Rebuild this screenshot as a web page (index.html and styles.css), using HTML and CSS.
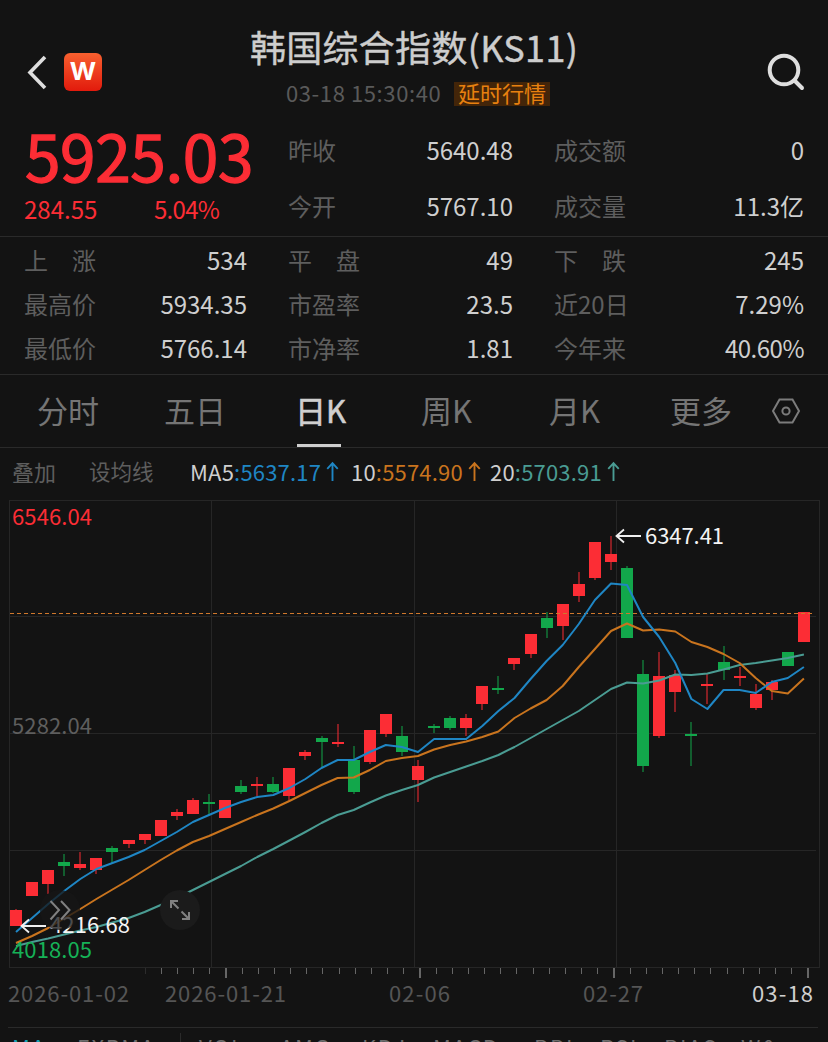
FILE: index.html
```html
<!DOCTYPE html>
<html lang="zh-CN">
<head>
<meta charset="utf-8">
<title>韩国综合指数(KS11)</title>
<link rel="stylesheet" href="styles.css">
</head>
<body>
<header class="header">
  <div class="header-left">
    <svg class="back" width="22" height="36" viewBox="0 0 22 36"><path d="M19 3 4 18.500 19 34" fill="none" stroke="#dedede" stroke-width="3.600"/></svg>
    <div class="logo"><span class="logo-mark">W</span></div>
  </div>
  <div class="heading">
    <h1 class="title">韩国综合指数(KS11)</h1>
    <div class="subtitle"><span class="time">03-18 15:30:40</span><span class="badge">延时行情</span></div>
  </div>
  <svg class="search" width="40" height="40" viewBox="0 0 40 40"><g fill="none" stroke="#dedede" stroke-width="4"><circle cx="18" cy="18" r="14.300"/><path d="m28.500 28.500 7.500 7.500" stroke-linecap="round"/></g></svg>
</header>

<section class="quote">
  <div class="price-box">
    <div class="price">5925.03</div>
    <div class="change"><span>284.55</span><span>5.04%</span></div>
  </div>
  <dl class="stat"><dt>昨收</dt><dd>5640.48</dd></dl>
  <dl class="stat"><dt>成交额</dt><dd>0</dd></dl>
  <dl class="stat"><dt>今开</dt><dd>5767.10</dd></dl>
  <dl class="stat"><dt>成交量</dt><dd>11.3亿</dd></dl>
</section>

<section class="details">
  <dl class="stat"><dt>上　涨</dt><dd>534</dd></dl>
  <dl class="stat"><dt>平　盘</dt><dd>49</dd></dl>
  <dl class="stat"><dt>下　跌</dt><dd>245</dd></dl>
  <dl class="stat"><dt>最高价</dt><dd>5934.35</dd></dl>
  <dl class="stat"><dt>市盈率</dt><dd>23.5</dd></dl>
  <dl class="stat"><dt>近20日</dt><dd>7.29%</dd></dl>
  <dl class="stat"><dt>最低价</dt><dd>5766.14</dd></dl>
  <dl class="stat"><dt>市净率</dt><dd>1.81</dd></dl>
  <dl class="stat"><dt>今年来</dt><dd class="tight">40.60%</dd></dl>
</section>

<nav class="tabs">
  <span class="tab">分时</span>
  <span class="tab">五日</span>
  <span class="tab active">日K</span>
  <span class="tab">周K</span>
  <span class="tab">月K</span>
  <span class="tab">更多</span>
  <svg class="settings" width="30" height="28" viewBox="0 0 30 28"><g fill="none" stroke="#7c7c7c" stroke-width="2"><path d="M8.500 2.500h13L28 14l-6.500 11.500h-13L2 14z"/><circle cx="15" cy="14" r="3.600"/></g></svg>
</nav>

<div class="averages">
  <span class="tool overlay">叠加</span>
  <span class="tool lines">设均线</span>
  <span class="avg first">MA5<b class="ma5">:5637.17</b><svg class="arrow ma5" viewBox="0 0 12 20"><path d="M6 19V2M1 7.500 6 2l5 5.500"/></svg></span>
  <span class="avg second">10<b class="ma10">:5574.90</b><svg class="arrow ma10" viewBox="0 0 12 20"><path d="M6 19V2M1 7.500 6 2l5 5.500"/></svg></span>
  <span class="avg">20<b class="ma20">:5703.91</b><svg class="arrow ma20" viewBox="0 0 12 20"><path d="M6 19V2M1 7.500 6 2l5 5.500"/></svg></span>
</div>

<svg class="chart" id="chart" width="828" height="527" viewBox="0 500 828 527">
  <path class="grid" d="M9 500.500H819.500M9 616.500H816M9 733.500H816M9 850.500H816M9 967.500H819.500M9.500 500V968M211.500 500V968M414.500 500V968M616.500 500V968M819.500 500V968"/>
  <text class="label faint" x="12" y="734" textLength="80">5282.04</text>
  <g id="candles"></g>
  <path class="last-price" d="M10 613.500H814"/>
  <g id="lines"></g>
  <text class="label up" x="12" y="525" textLength="80">6546.04</text>
  <text class="label down" x="12" y="958" textLength="80">4018.05</text>
  <path class="pointer" d="M641 536H617M624 529.500 616.500 536l7.500 6.500"/>
  <text class="label white" x="645" y="544" textLength="79">6347.41</text>
  <path class="pointer" d="M46 926H22M29 919.500 21.500 926l7.500 6.500"/>
  <text class="label white" x="50" y="933" textLength="80">4216.68</text>
  <circle class="control" cx="60" cy="910" r="20"/>
  <path class="control-icon" d="m50.500 901 8.500 9-8.500 9.500M61 901l8.500 9-8.500 9.500"/>
  <circle class="control solid" cx="180" cy="910" r="20"/>
  <path class="control-icon" d="M171 908v-7h7M171 901l7.500 7.500M182 919h7v-7M189 919l-7.500-7.500"/>
  <g id="ticks"></g>
  <text class="date" x="8" y="1002" textLength="121">2026-01-02</text>
  <text class="date" x="165" y="1002" textLength="121">2026-01-21</text>
  <text class="date" x="389" y="1002" textLength="61">02-06</text>
  <text class="date" x="583" y="1002" textLength="60">02-27</text>
  <text class="date current" x="752" y="1002" textLength="61">03-18</text>
</svg>

<footer class="indicators">
  <span class="indicator main">MA</span><span class="indicator w2">EXPMA</span><i class="divider"></i>
  <span class="indicator w3">VOL</span><span class="indicator w4">AMO</span><span class="indicator w5">KDJ</span><span class="indicator w6">MACD</span><span class="indicator w7">BBI</span><span class="indicator w8">RSI</span><span class="indicator w9">BIAS</span><span class="indicator">W&amp;</span>
</footer>
<script src="chart.js"></script>
</body>
</html>
```

FILE: styles.css
```css
* { box-sizing: border-box; margin: 0; padding: 0; }
body {
  width: 828px;
  height: 1042px;
  overflow: hidden;
  background: #131313;
  color: #cdcdcd;
  font-family: "Noto Sans CJK SC", "Noto Sans", sans-serif;
}
.header {
  display: grid;
  grid-template-columns: 228px 1fr 228px;
  height: 122px;
  padding-top: 22px;
}
.header-left { display: flex; align-items: center; padding-left: 26px; }
.logo {
  width: 38px;
  height: 38px;
  margin-left: 16px;
  border-radius: 6px;
  background: linear-gradient(#f8602f, #e21a0c);
  color: #fff;
  font: 700 24px/38px Inter, sans-serif;
  text-align: center;
}
.logo-mark { display: block; transform: scaleX(1.06); }
.heading { text-align: center; }
.title {
  height: 49px;
  color: #cdcdcd;
  font-size: 36px;
  font-weight: 400;
  line-height: 49px;
  letter-spacing: 0.3px;
  white-space: nowrap;
  -webkit-text-stroke: 0.4px;
}
.subtitle {
  display: flex;
  justify-content: center;
  align-items: center;
  height: 44px;
  padding: 1px 0 0 8px;
}
.time { width: 168px; height: 34px; color: #5a5a5a; font-size: 22px; line-height: 30px; letter-spacing: 0.6px; text-align: left; white-space: nowrap; }
.badge { width: 96px; height: 24px; background: #432509; color: #e8810f; font-size: 22px; line-height: 21px; }
.search { justify-self: end; align-self: start; margin: 30px 22px 0 0; }

.quote, .details {
  display: grid;
  grid-template-columns: 223px 225px 250px;
  column-gap: 41px;
  padding-left: 24px;
  border-bottom: 1px solid #2a2a2a;
}
.quote { grid-template-rows: 56px 56px; height: 115px; }
.details { grid-auto-rows: 44px; height: 138px; padding-top: 1px; }
.price-box { grid-row: span 2; color: #fc2d35; }
.price {
  height: 68px;
  padding-left: 1px;
  font-size: 64px;
  line-height: 64px;
  letter-spacing: -0.4px;
  white-space: nowrap;
  -webkit-text-stroke: 1.3px;
}
.change { display: flex; font-size: 24px; line-height: 38px; }
.change span:first-child { width: 130px; }
.change span:last-child { letter-spacing: -0.7px; }
.stat { display: flex; justify-content: space-between; align-items: center; font-size: 24px; line-height: 44px; }
.stat dt { color: #5e5e5e; }
.stat dd { color: #cfcfcf; }
.stat .tight { letter-spacing: -0.5px; }

.tabs {
  display: grid;
  grid-template-columns: 127px 131px 126px 128px 121px 101px 32px;
  height: 73px;
  padding-left: 37px;
  border-bottom: 1px solid #2a2a2a;
}
.tab { justify-self: start; height: 71.500px; color: #757575; font-size: 31px; line-height: 69px; white-space: nowrap; }
.tab.active {
  width: 44px;
  margin-left: 2px;
  border-bottom: 3px solid #cfcfcf;
  color: #cfcfcf;
  text-indent: -2px;
  -webkit-text-stroke: 0.6px;
}
.settings { align-self: center; }

.averages { display: flex; align-items: center; height: 52px; padding: 0 0 7px 12px; font-size: 22px; line-height: 40px; white-space: nowrap; }
.tool { color: #5e5e5e; }
.overlay { width: 77px; }
.lines { width: 101px; font-size: 21.500px; }
.avg { display: flex; align-items: center; color: #cfcfcf; letter-spacing: 0.2px; }
.avg.first { width: 161px; }
.avg.second { width: 139px; }
.avg b { font-weight: 400; }
.arrow { width: 13px; height: 21px; margin: 1px 0 0 5px; fill: none; stroke: currentColor; stroke-width: 1.800; }
.ma5 { color: #1f86c4; }
.ma10 { color: #c9741e; }
.ma20 { color: #4a9c93; }

.chart { display: block; }
.grid { fill: none; stroke: #262626; }
.last-price { fill: none; stroke: #d0782c; stroke-dasharray: 4 3; }
.up { fill: #fc2d35; }
.down { fill: #12a74b; }
.label { font-size: 22px; }
.label.down { fill: #16b157; }
.label.faint { fill: #5e5e5e; }
.label.white { fill: #f4f4f4; }
.pointer { fill: none; stroke: #f0f0f0; stroke-width: 1.800; }
.avg-line { fill: none; stroke: currentColor; stroke-width: 2; stroke-linejoin: round; }
.control { fill: #161616; fill-opacity: 0.76; }
.control.solid { fill: #1b1b1b; fill-opacity: 1; }
.control-icon { fill: none; stroke: #808080; stroke-width: 2; }
.tick { stroke: #666; stroke-width: 1; }
.tick.major { stroke-width: 2; }
.date { font-size: 22px; fill: #555; }
.date.current { fill: #cfcfcf; }

.indicators {
  display: flex;
  height: 30px;
  margin: 0 10px 0 8px;
  padding: 5px 0 0 4px;
  border-top: 1px solid #2a2a2a;
  color: #6c6c6c;
  font-size: 22px;
  line-height: 26px;
  letter-spacing: 1.6px;
  white-space: nowrap;
}
.indicator { flex: none; }
.main { width: 65px; color: #18a0b4; }
.w2 { width: 103px; }
.divider { width: 1px; height: 12px; background: #2a2a2a; }
.w3 { width: 99px; padding-left: 18px; }
.w4 { width: 82px; }
.w5 { width: 71px; }
.w6 { width: 101px; }
.w7 { width: 66px; }
.w8 { width: 64px; }
.w9 { width: 77px; }
```

FILE: chart.js
```js
const NS = 'http://www.w3.org/2000/svg';
const step = 16.08;
const cx = i => 16 + i * step;

function add(parent, name, attrs) {
  const el = document.createElementNS(NS, name);
  for (const key in attrs) el.setAttribute(key, attrs[key]);
  document.getElementById(parent).appendChild(el);
}

// Each candle: rising flag, body top, body bottom, wick top, wick bottom
const candles = [
  [1,910,926,909,926],[1,882,896,882,896],[1,870,884,870,894],[0,862,866,854,876],[1,864,868,852,870],
  [1,858,870,858,874],[0,848,852,846,863],[1,840,844,840,848],[1,834,840,834,844],[1,820,836,820,836],
  [1,812,816,809,820],[1,800,814,798,814],[0,802,804,794,815],[1,800,818,800,818],[0,786,792,780,794],
  [1,784,786,777,796],[0,784,792,777,793],[1,768,796,768,801],[1,752,756,750,760],[0,738,742,736,768],
  [1,742,744,724,747],[0,760,792,746,794],[1,730,762,730,764],[1,714,734,714,737],[0,736,752,726,756],
  [1,766,780,760,802],[0,726,728,724,733],[0,718,728,716,730],[1,718,728,714,736],[1,686,704,686,710],
  [0,688,690,676,694],[1,658,664,658,670],[1,634,654,634,658],[0,618,628,612,638],[1,604,626,604,640],
  [1,584,596,572,602],[1,542,578,542,580],[1,554,562,536,570],[0,568,638,566,638],[0,674,766,660,772],
  [1,676,736,652,738],[1,675,692,670,712],[0,734,736,722,766],[1,684,686,673,704],[0,662,670,646,680],
  [1,676,678,667,686],[1,694,708,684,710],[1,682,690,680,700],[0,652,666,652,666],[1,612,642,612,642]
];
candles.forEach(([rising, top, bottom, high, low], i) => {
  const x = Math.round(cx(i));
  const cls = rising ? 'up' : 'down';
  add('candles', 'rect', { class: cls, x: x - 0.5, y: high, width: 1, height: low - high });
  add('candles', 'rect', { class: cls, x: x - 6, y: top, width: 12, height: bottom - top });
});

const averages = {
  ma20: [946,942,938.5,934.5,930.5,927,922.5,918,912,905,898,890,882,874,866,857,849,840.5,832,823,815,810,802.5,795.5,790,785,777.5,772,766.5,761,755,747,738,729,720,711,700,689,682.5,683.5,680.5,674.5,675,673.5,669.5,665,663,660.5,658,654.5],
  ma10: [943,936,928,918.5,909,899,889.5,880,870,860,850.5,842,836,829,822,815,808.5,801,793,785,778,777.5,770,761,758,756,749.5,745,741.5,737,731.5,718,708.5,700,686,667,649,631,623.5,630.5,629.5,631.5,642,647,654,663,678,691,693.5,678.5],
  ma5: [932,918,904,891,879,869,863,857,850,841,832,822,815,808,802,797,795,788,779,768,760,760,752,745,747,752,739,739,739,726,711,698,679,661,645,624,600,583.5,585,617,637,663,699,709,690,690,693,682,678,667]
};
for (const name in averages) {
  const points = averages[name].map((y, i) => cx(i).toFixed(1) + ',' + y).join(' ');
  add('lines', 'polyline', { class: 'avg-line ' + name, points });
}

// Twelve trading days between two labelled dates
for (let k = 0; k <= 41; k++) {
  const x = 808 - k * 16.17;
  const major = k % 12 === 0;
  add('ticks', 'path', {
    class: major ? 'tick major' : 'tick',
    d: 'M' + (major ? Math.round(x) : Math.floor(x) + 0.5) + ' 968v' + (major ? 10 : 6),
    opacity: k === 41 ? 0.3 : 1
  });
}
```
